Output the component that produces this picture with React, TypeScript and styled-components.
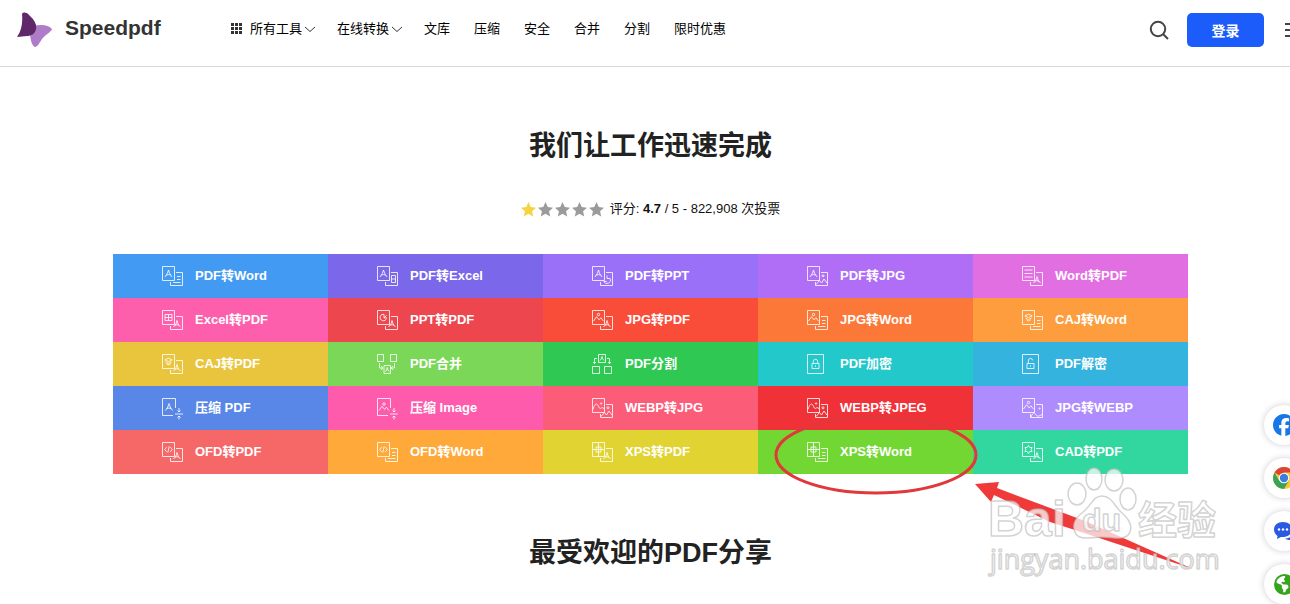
import React from "react";
import styled, { createGlobalStyle } from "styled-components";
import { FaFacebook, FaEarthAmericas } from "react-icons/fa6";

const GlobalStyle = createGlobalStyle`
  * { box-sizing: border-box; }
  html { overflow: hidden; }
  body {
    margin: 0;
    background: #fff;
    color: #222;
    font-family: "Liberation Sans", "Noto Sans CJK SC", sans-serif;
    font-size: 13px;
  }
  a { color: inherit; text-decoration: none; }
  button { font: inherit; border: 0; padding: 0; cursor: pointer; background: none; }
`;

const Shell = styled.div`
  width: calc(100% + 11px);
`;

const Header = styled.header`
  display: flex;
  align-items: center;
  height: 67px;
  padding: 0 0 6px 16px;
  border-bottom: 1px solid #d9d9d9;
`;

const Brand = styled.a`
  display: flex;
  align-items: center;
  gap: 13px;
  width: 215px;
  color: #333;
  font-size: 21px;
  font-weight: bold;
  line-height: 36px;

  span { padding-bottom: 4px; }
`;

const Nav = styled.nav`
  display: flex;
  align-items: center;
  gap: 24px;
  flex: 1;
  color: #000;
  line-height: 20px;
  padding-bottom: 3px;
`;

const MenuButton = styled.button`
  display: flex;
  align-items: center;
  gap: 2px;
  margin-right: -3px;
  color: #000;
  line-height: 20px;
`;

const DotsIcon = styled.svg`
  margin-right: 6px;
`;

const Actions = styled.div`
  display: flex;
  align-items: center;
`;

const IconButton = styled.button`
  display: flex;
  color: #444;
`;

const LoginButton = styled.button`
  width: 77px;
  height: 34px;
  margin: 0 20px 0 18px;
  border-radius: 5px;
  background: #1b5cfa;
  color: #fff;
  font-size: 14px;
  font-weight: bold;
`;

const Main = styled.main`
  display: flex;
  flex-direction: column;
  align-items: center;
  padding-bottom: 40px;
`;

const Heading = styled.h2`
  margin: 59px 0 0;
  color: #222;
  font-size: 27px;
  font-weight: bold;
  line-height: 40px;
`;

const Rating = styled.div`
  display: flex;
  align-items: center;
  gap: 6px;
  margin: 33px 0 35px;
  color: #111;
  line-height: 20px;
`;

const Stars = styled.span`
  display: flex;
  gap: 2px;
`;

const ToolArea = styled.section`
  position: relative;
  width: 100%;
  max-width: 1075px;
`;

const ToolGrid = styled.div`
  display: grid;
  grid-template-columns: repeat(5, 1fr);
`;

const Tool = styled.a<{ $color: string }>`
  display: flex;
  align-items: center;
  gap: 11px;
  height: 44px;
  padding-left: 49px;
  background: ${(p) => p.$color};
  color: #fff;
  font-weight: bold;
  line-height: 20px;
`;

const Annotation = styled.svg`
  position: absolute;
  top: 146px;
  left: 657px;
  width: 460px;
  height: 190px;
  pointer-events: none;
`;

const Social = styled.aside`
  position: fixed;
  right: -14px;
  bottom: 0;
  display: flex;
  flex-direction: column;
  gap: 13px;
`;

const SocialLink = styled.a`
  display: flex;
  align-items: center;
  justify-content: center;
  width: 40px;
  height: 40px;
  border-radius: 50%;
  background: #fff;
  box-shadow: 0 0 6px rgba(60, 60, 90, 0.25);
`;

type Mark =
  | "pdf" | "lines" | "sheet" | "slide" | "image" | "caj"
  | "code" | "xps" | "cad" | "photo";

const marks: Record<Mark, React.ReactNode> = {
  pdf: <path d="M-3.500 3.500Q-.6 0 0-3.500Q.6 0 3.500 3.500M-2 1.600Q0 .4 2 1.600" />,
  lines: <path d="M-4-3.500h8M-4 0h8M-4 3.500h8" />,
  sheet: <path d="M-3.5-3h7v6h-7zM0-3v6M-3.5 0h7" />,
  slide: <path d="M3 1A3.3 3.3 0 1 1 .5-3.2M.5-3.2V.4H3.4M.5.4L3-2" />,
  image: (
    <>
      <circle cx="0" cy="-3" r="1.2" />
      <path d="M-5 3.6L-2-.8L.6 2.4L2.4.2L5 3.6" />
    </>
  ),
  photo: (
    <>
      <circle cx="2.6" cy="-2" r=".7" />
      <path d="M-5.5 3.8C-4-.6-3-1.6-1.8-1.4C0-1 .3 3.2 1.8 3C3 2.8 3 1.2 5.5 3" />
    </>
  ),
  caj: <path d="M-3.6-1.6L0-3.4L3.6-1.6L0 .2zM-3 .6L0 2.2L3 .6M-2 2.4L0 3.5L2 2.4" />,
  code: <path d="M-1.8-2.4L-3.8 0L-1.8 2.4M1.8-2.4L3.8 0L1.8 2.4M.7-3.2L-.7 3.2" />,
  xps: <path d="M0-7V7M-6 0H6M-2.5-2.5h5v5h-5z" />,
  cad: <path d="M0-4L1.3-2H3.6L2.6 0L3.6 2H1.3L0 4L-1.3 2H-3.6L-2.6 0L-3.6-2H-1.3z" />,
};

/* Second page's mark: a small symbol that fits the uncovered corner. */
const cornerMarks: Partial<Record<Mark, React.ReactNode>> = {
  lines: <path d="M15 10.5h3.5M15 13.5h3.5M11 16.5h7.5" />,
  sheet: <path d="M14.5 9.5h4v7h-4zM14.5 13h4" />,
  slide: <path d="M15 9.5v3h3.2M18.2 12.5A3.4 3.4 0 1 1 11.8 15.5h3" />,
  image: (
    <>
      <circle cx="16" cy="9.8" r="1" />
      <path d="M9 18.5L12.5 14.5L14.5 17L17 13L20 17" />
    </>
  ),
  photo: (
    <>
      <circle cx="17.5" cy="10.5" r=".6" />
      <path d="M9 19C10.5 15 12 14 13.5 16C15 19 16.5 18.5 20 16.5" />
    </>
  ),
  pdf: <path d="M11.5 17Q14.5 14.5 15 10.5Q15.5 14.5 18.5 17M13 15.2Q15 14.2 17 15.2" />,
};

type IconKind = { from: Mark; to: Mark } | "merge" | "split" | "lock" | "unlock" | "shrinkPdf" | "shrinkImage";

function iconBody(kind: IconKind) {
  if (kind === "merge")
    return (
      <path d="M.5.5h6v7h-6zM13.5.5h6v7h-6zM2.5 9v5h3M17.5 9v5h-3M4 12l2 2l-2 2M16 12l-2 2l2 2M7 11.5h6.5v8H7zM8.5 17.5Q10 16 10.2 13.5Q10.5 16 12 17.5" />
    );
  if (kind === "split")
    return (
      <path d="M6.5.5h7v8h-7zM8 6.5Q9.6 5 10 2.5Q10.4 5 12 6.5M5 4.5H2.500v5M15 4.5h2.5v5M1 8L2.500 9.7L4 8M16 8l1.5 1.7L19 8M.5 12.5h7v7h-7zM12.5 12.5h7v7h-7z" />
    );
  if (kind === "lock" || kind === "unlock")
    return (
      <>
        <path d="M.5.5h16v19H.5z" />
        <path d="M5 9.5h7v5H5z" />
        <path d={kind === "lock" ? "M6.3 9.3V7.5a2.2 2.2 0 0 1 4.4 0v1.8M8.5 11.3v1.5" : "M6.3 9.3V7a2.2 2.2 0 0 1 4.4-.6M8.5 11.3v1.5"} />
      </>
    );
  if (kind === "shrinkPdf" || kind === "shrinkImage")
    return (
      <>
        <path d="M11 17.5H.5V.5h13v9.5" />
        <g transform="translate(7 9)">{marks[kind === "shrinkPdf" ? "pdf" : "image"]}</g>
        <path d="M13 16h8M17 10v4M15.5 12.5l1.5 1.5l1.5-1.5M17 21.5V18M15.5 19.5L17 18l1.5 1.5" />
      </>
    );
  return (
    <>
      <path d="M.5.5h12v14H.5z" />
      <g transform="translate(6.5 7.5)">{marks[kind.from]}</g>
      <path d="M14 6.5h6.5v13H8.5v-3.5" />
      {cornerMarks[kind.to]}
    </>
  );
}

function ToolIcon({ kind }: { kind: IconKind }) {
  return (
    <svg width="22" height="23" viewBox="0 -1 22 23" fill="none" stroke="#fff" strokeOpacity=".82" aria-hidden="true">
      {iconBody(kind)}
    </svg>
  );
}

const tools: { label: string; color: string; kind: IconKind }[] = [
  { label: "PDF转Word", color: "#429af2", kind: { from: "pdf", to: "lines" } },
  { label: "PDF转Excel", color: "#7a67e9", kind: { from: "pdf", to: "sheet" } },
  { label: "PDF转PPT", color: "#9a70f8", kind: { from: "pdf", to: "slide" } },
  { label: "PDF转JPG", color: "#b06ef7", kind: { from: "pdf", to: "image" } },
  { label: "Word转PDF", color: "#e16fe1", kind: { from: "lines", to: "pdf" } },
  { label: "Excel转PDF", color: "#fe5fac", kind: { from: "sheet", to: "pdf" } },
  { label: "PPT转PDF", color: "#ee464f", kind: { from: "slide", to: "pdf" } },
  { label: "JPG转PDF", color: "#f94c39", kind: { from: "image", to: "pdf" } },
  { label: "JPG转Word", color: "#fc7839", kind: { from: "image", to: "lines" } },
  { label: "CAJ转Word", color: "#fd9d3e", kind: { from: "caj", to: "lines" } },
  { label: "CAJ转PDF", color: "#e9c53e", kind: { from: "caj", to: "pdf" } },
  { label: "PDF合并", color: "#7bd757", kind: "merge" },
  { label: "PDF分割", color: "#2fc852", kind: "split" },
  { label: "PDF加密", color: "#23c8cb", kind: "lock" },
  { label: "PDF解密", color: "#33b3de", kind: "unlock" },
  { label: "压缩 PDF", color: "#5887e7", kind: "shrinkPdf" },
  { label: "压缩 Image", color: "#fe5bad", kind: "shrinkImage" },
  { label: "WEBP转JPG", color: "#fb5c78", kind: { from: "photo", to: "image" } },
  { label: "WEBP转JPEG", color: "#f03138", kind: { from: "photo", to: "image" } },
  { label: "JPG转WEBP", color: "#ae8cfe", kind: { from: "image", to: "photo" } },
  { label: "OFD转PDF", color: "#f66868", kind: { from: "code", to: "pdf" } },
  { label: "OFD转Word", color: "#fea93a", kind: { from: "code", to: "lines" } },
  { label: "XPS转PDF", color: "#e1d332", kind: { from: "xps", to: "pdf" } },
  { label: "XPS转Word", color: "#72d732", kind: { from: "xps", to: "lines" } },
  { label: "CAD转PDF", color: "#32d79f", kind: { from: "cad", to: "pdf" } },
];

const links = ["文库", "压缩", "安全", "合并", "分割", "限时优惠"];

function Logo() {
  return (
    <svg width="36" height="36" viewBox="0 0 36 36" aria-hidden="true">
      <path d="M18 14C25 12 33 13 36 17C35 20 29 23 26 27C23 32 21 35 19 35C16 34 15 29 14 23z" fill="#ae7cc9" />
      <path d="M1 25C5 19 7 12 6 2C7-.5 11 0 14 4C19 8 21 14 20 17C19 22 15 24 11 24z" fill="#5f2868" />
    </svg>
  );
}

function Chevron() {
  return (
    <svg width="12" height="8" viewBox="0 0 12 8" fill="none" stroke="#333" aria-hidden="true">
      <path d="M1 2L6 6.5L11 2" />
    </svg>
  );
}

function GridDots() {
  return (
    <DotsIcon width="11" height="11" viewBox="0 0 11 11" fill="#333" aria-hidden="true">
      {[0, 4, 8].map((y) => [0, 4, 8].map((x) => <rect key={`${x}-${y}`} x={x} y={y} width="3" height="3" />))}
    </DotsIcon>
  );
}

function ChromeMark() {
  return (
    <svg width="22" height="22" viewBox="0 0 22 22" aria-hidden="true">
      <circle cx="11" cy="11" r="11" fill="#f8c933" />
      <path d="M11 11L1.5 5.5A11 11 0 0 1 20.5 5.5H11z" fill="#dc4536" />
      <path d="M11 11L6.2 13.8L1.5 5.5A11 11 0 0 0 11 22L15.8 13.8z" fill="#3aa35a" />
      <circle cx="11" cy="11" r="5.3" fill="#fff" />
      <circle cx="11" cy="11" r="4.2" fill="#3d7de0" />
    </svg>
  );
}

function ChatMark() {
  return (
    <svg width="22" height="20" viewBox="0 0 22 20" aria-hidden="true">
      <path d="M10 1C4.500 1 1 4 1 8.500C1 11.500 2.500 13.500 4.500 15L4 18L8 16C14 16.500 19 13.500 19 8.500C19 4 15.500 1 10 1z" fill="#2b5be0" />
      <path d="M12 17.500C16 17.500 19 15.500 20.500 11.500C22.500 14 21.500 16.500 20 17.500L20.500 20L17.500 18.700C15.500 19.300 13.500 18.800 12 17.500z" fill="#2b5be0" />
      <g fill="#fff">
        <circle cx="6" cy="8.500" r="1.200" />
        <circle cx="10" cy="8.500" r="1.200" />
        <circle cx="14" cy="8.500" r="1.200" />
      </g>
    </svg>
  );
}

function Callout() {
  return (
    <Annotation viewBox="770 400 460 190" aria-hidden="true">
      <ellipse cx="876" cy="455" rx="100" ry="38" fill="none" stroke="#e0383b" strokeWidth="3" />
      <path d="M975 484L999 482L997 488L1085 521L1193 569L1078 531L1050 522L994 495L991 502z" fill="#f03a3a" />
      <g fill="#fff" fillOpacity=".72" stroke="#bbb" strokeOpacity=".65" strokeWidth="1.500" strokeLinejoin="round">
        <ellipse cx="1077" cy="494" rx="9" ry="11" />
        <ellipse cx="1094" cy="479" rx="8" ry="11" />
        <ellipse cx="1114" cy="480" rx="9" ry="11" />
        <ellipse cx="1128" cy="499" rx="8" ry="11" />
        <path d="M1102 496C1093 496 1091 506 1083 512C1075 518 1071 526 1076 534C1081 541 1093 537 1102 537C1112 537 1123 541 1129 534C1134 526 1128 518 1121 512C1114 506 1112 496 1102 496z" />
        <g fontFamily="Liberation Sans, Noto Sans CJK SC, sans-serif" fontWeight="bold">
          <text x="988" y="536" fontSize="50">Bai</text>
          <text x="1082" y="531" fontSize="32">du</text>
          <text x="1138" y="534" fontSize="39">经验</text>
        </g>
        <text x="990" y="569" fontSize="27" fontFamily="Open Sans, sans-serif">jingyan.baidu.com</text>
      </g>
    </Annotation>
  );
}

export default function App() {
  return (
    <>
      <GlobalStyle />
      <Shell>
        <Header>
          <Brand href="#">
            <Logo />
            <span>Speedpdf</span>
          </Brand>
          <Nav>
            <MenuButton type="button">
              <GridDots />
              所有工具
              <Chevron />
            </MenuButton>
            <MenuButton type="button">
              在线转换
              <Chevron />
            </MenuButton>
            {links.map((label) => (
              <a key={label} href="#">{label}</a>
            ))}
          </Nav>
          <Actions>
            <IconButton type="button" aria-label="搜索">
              <svg width="20" height="20" viewBox="0 0 20 20" fill="none" stroke="currentColor" strokeWidth="2">
                <circle cx="9" cy="9" r="7.200" />
                <path d="M14 14L19 19" />
              </svg>
            </IconButton>
            <LoginButton type="button">登录</LoginButton>
            <IconButton type="button" aria-label="菜单">
              <svg width="17" height="16" viewBox="0 0 17 16" stroke="currentColor" strokeWidth="2">
                <path d="M1 2H17M1 8H17M1 14H17" />
              </svg>
            </IconButton>
          </Actions>
        </Header>
        <Main>
          <Heading as="h1">我们让工作迅速完成</Heading>
          <Rating>
            <Stars>
              {[0, 1, 2, 3, 4].map((i) => (
                <svg key={i} width="15" height="15" viewBox="0 0 16 16" fill={i === 0 ? "#f5d342" : "#9b9b9b"} aria-hidden="true">
                  <path d="M8 0L10.400 5.300L16 6L11.800 9.800L13 15.500L8 12.600L3 15.500L4.200 9.800L0 6L5.600 5.300z" />
                </svg>
              ))}
            </Stars>
            <span>
              评分: <strong>4.7</strong> / 5 - 822,908 次投票
            </span>
          </Rating>
          <ToolArea>
            <ToolGrid>
              {tools.map((tool) => (
                <Tool key={tool.label} href="#" $color={tool.color}>
                  <ToolIcon kind={tool.kind} />
                  <span>{tool.label}</span>
                </Tool>
              ))}
            </ToolGrid>
            <Callout />
          </ToolArea>
          <Heading>最受欢迎的PDF分享</Heading>
        </Main>
      </Shell>
      <Social aria-label="分享">
        <SocialLink href="#" aria-label="Facebook"><FaFacebook size={22} color="#1877e8" /></SocialLink>
        <SocialLink href="#" aria-label="Chrome"><ChromeMark /></SocialLink>
        <SocialLink href="#" aria-label="在线咨询"><ChatMark /></SocialLink>
        <SocialLink href="#" aria-label="语言"><FaEarthAmericas size={21} color="#35a51c" /></SocialLink>
      </Social>
    </>
  );
}
